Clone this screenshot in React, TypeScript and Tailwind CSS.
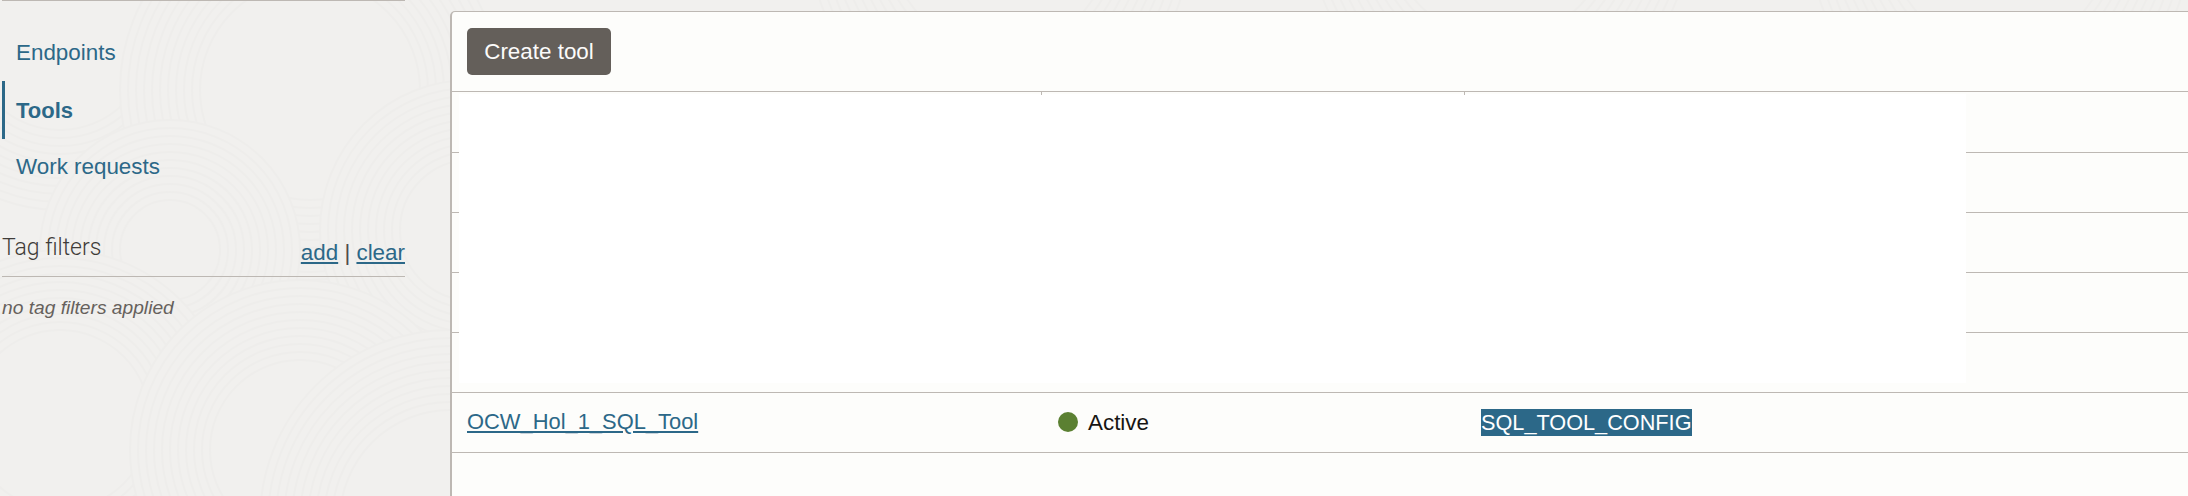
import React from 'react';

const font = "font-['Liberation_Sans',Arial,sans-serif]";

// Fans of arcs, each one painted over the last like the console's swirl texture
const fans = [
  { cx: 60, cy: 40, r: 170 },
  { cx: 310, cy: 90, r: 190 },
  { cx: 170, cy: 250, r: 130 },
  { cx: 470, cy: 230, r: 150 },
  { cx: 60, cy: 420, r: 170 },
  { cx: 300, cy: 450, r: 170 },
  { cx: 450, cy: 520, r: 190 },
  { cx: 1000, cy: -60, r: 190 },
  { cx: 1500, cy: -70, r: 190 },
  { cx: 2000, cy: -60, r: 190 },
];
const rings = [0, 8, 16, 24, 32, 40, 48, 56, 64, 72, 80];

function Texture() {
  return (
    <svg className="absolute inset-0" width="2188" height="496" fill="none" aria-hidden="true">
      {fans.map((f, i) => (
        <g key={i}>
          <circle cx={f.cx} cy={f.cy} r={f.r} fill="#f1f0ee" />
          {rings.map((d) => (
            <circle key={d} cx={f.cx} cy={f.cy} r={f.r - d} stroke="#eeedeb" strokeWidth="2" />
          ))}
        </g>
      ))}
    </svg>
  );
}

function SideLink({ label, active, first, last }: { label: string; active?: boolean; first?: boolean; last?: boolean }) {
  return (
    <a
      href="#"
      className={
        active
          ? 'flex items-center h-[58px] pl-[11px] border-l-[3px] border-[#2c6888] text-[22px] font-bold text-[#2c6888]'
          : `flex items-center h-[58px] pl-[14px] text-[22.4px] text-[#2c6888] ${first ? 'pt-[2px]' : ''} ${last ? '-mt-px' : ''}`
      }
    >
      {label}
    </a>
  );
}

function Row({ first, children }: { first?: boolean; children?: React.ReactNode }) {
  return (
    <div className={`flex items-center ${first ? 'h-[61px]' : 'h-[60px]'} border-b border-[#bdb8b3]`}>
      {children}
    </div>
  );
}

export default function App() {
  return (
    <div className={`relative flex h-[496px] w-[2188px] overflow-hidden bg-[#f1f0ee] ${font}`}>
      <Texture />

      {/* Left menu */}
      <aside className="relative w-[403px] ml-[2px] shrink-0">
        <div className="border-t border-[#bdb8b3]" />
        <nav className="flex flex-col pt-[22px]">
          <SideLink label="Endpoints" first />
          <SideLink label="Tools" active />
          <SideLink label="Work requests" last />
        </nav>
        <div className="mt-[29px] flex items-end justify-between h-[52px] pb-[6px] border-b border-[#bdb8b3]">
          <span className="text-[23px] leading-[34px] mb-[5px] font-light font-['Roboto',sans-serif] text-[#3f3c39]">Tag filters</span>
          <span className="text-[22.4px] leading-[34px] text-[#4f4c49]">
            <a href="#" className="underline text-[#2c6888]">add</a>
            {' | '}
            <a href="#" className="underline text-[#2c6888]">clear</a>
          </span>
        </div>
        <p className="mt-[19px] text-[19.2px] leading-[24px] italic text-[#66615c]">no tag filters applied</p>
      </aside>

      {/* Tools table */}
      <main className="relative flex-1 ml-[45px] mt-[11px] bg-[#fdfdfb] border-l-2 border-t border-[#bdb8b3] rounded-tl-[5px]">
        <div className="flex items-center h-[80px] pl-[15px] border-b border-[#bdb8b3]">
          <button className="h-[47px] w-[144px] rounded-[5px] bg-[#645f5a] text-[22.4px] text-[#fcfbfa]">
            Create tool
          </button>
        </div>

        <Row first />
        <Row />
        <Row />
        <Row />
        <Row />
        <Row>
          <div className="w-[591px] pl-[15px]">
            <a href="#" className="text-[21.9px] underline text-[#2c6888]">OCW_Hol_1_SQL_Tool</a>
          </div>
          <div className="flex items-center w-[423px] pl-[15px] gap-[10px]">
            <span className="w-[20px] h-[20px] rounded-full bg-[#5b8032]" />
            <span className="text-[22.4px] text-[#161513]">Active</span>
          </div>
          <div className="pl-[15px]">
            <span className="block bg-[#2c6888] text-[21.7px] leading-[27px] text-white">SQL_TOOL_CONFIG</span>
          </div>
        </Row>

        {/* Blanked-out rows, with the column ticks just showing above */}
        <div className="absolute left-[7px] top-[82px] w-[1507px] h-[289px] bg-white" />
        <div className="absolute left-[589px] top-[80px] w-px h-[3px] bg-[#bdb8b3]" />
        <div className="absolute left-[1012px] top-[80px] w-px h-[3px] bg-[#bdb8b3]" />
      </main>
    </div>
  );
}
